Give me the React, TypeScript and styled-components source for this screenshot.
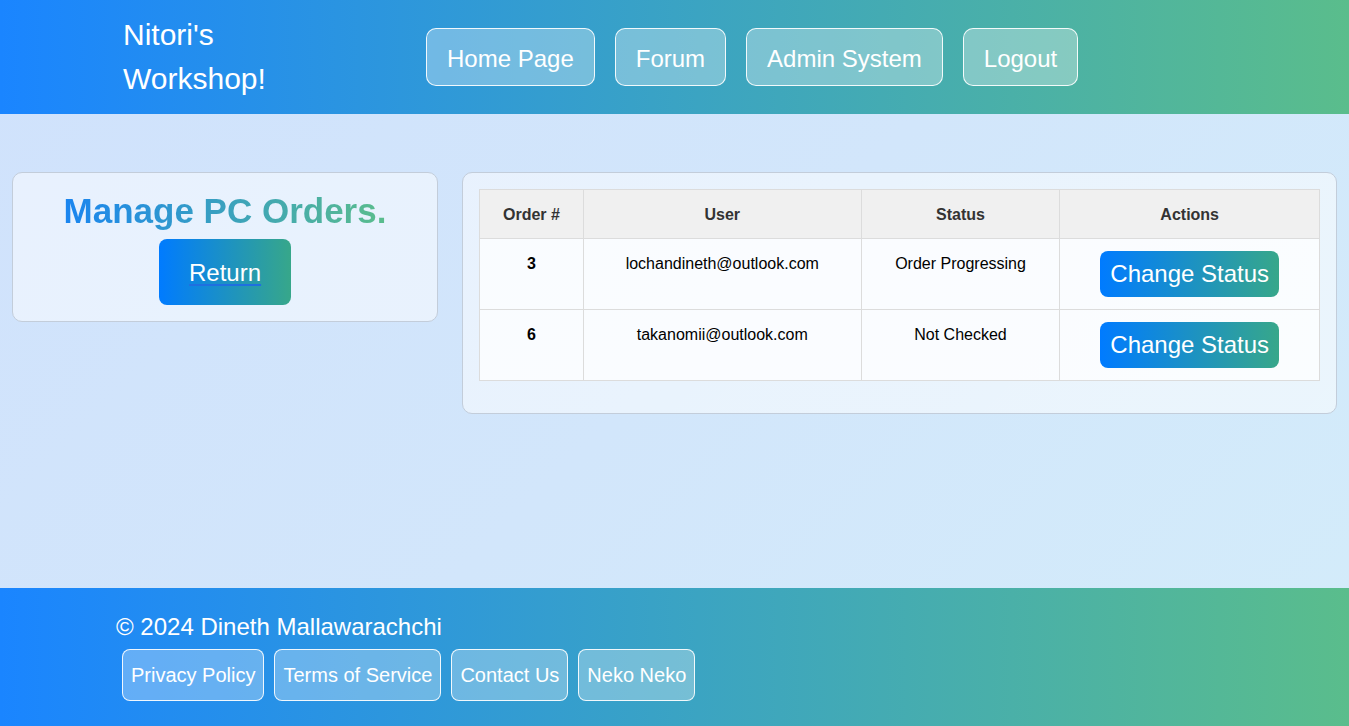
import * as React from "react";
import styled, { createGlobalStyle } from "styled-components";

const GlobalStyle = createGlobalStyle`
  html, body {
    margin: 0;
    padding: 0;
  }
  body {
    font-family: "Liberation Sans", Arial, sans-serif;
  }
  * {
    box-sizing: border-box;
  }
`;

const brandGradient = "linear-gradient(90deg, #1a85ff 0%, #3aa3c4 50%, #5abd8c 100%)";
const buttonGradient = "linear-gradient(90deg, #007bff, #37a78a)";

const Page = styled.div`
  min-height: 100vh;
  display: flex;
  flex-direction: column;
  background: linear-gradient(135deg, #d0e2fc 0%, #d2e6fb 50%, #d3ecfa 100%);
`;

const Header = styled.header`
  height: 114px;
  display: flex;
  align-items: center;
  padding: 0 0 0 123px;
  background: ${brandGradient};
  color: #fff;
`;

const Brand = styled.div`
  width: 160px;
  font-size: 30px;
  line-height: 44px;
`;

const Nav = styled.nav`
  display: flex;
  gap: 20px;
  margin-left: 143px;
`;

const NavLink = styled.a`
  display: block;
  padding: 16px 20px 13px;
  font-size: 24px;
  line-height: 27px;
  color: #fff;
  text-decoration: none;
  background: rgba(255, 255, 255, 0.32);
  border: 1px solid rgba(255, 255, 255, 0.9);
  border-radius: 10px;
`;

const Main = styled.main`
  flex: 1;
  display: grid;
  grid-template-columns: 426px 1fr;
  align-items: start;
  gap: 24px;
  padding: 58px 12px 0;
`;

const Card = styled.section`
  background: rgba(255, 255, 255, 0.5);
  border: 1px solid #c3cdda;
  border-radius: 10px;
  padding: 16px;
`;

const ManageCard = styled(Card)`
  display: flex;
  flex-direction: column;
  align-items: center;
`;

const Title = styled.h2`
  margin: 1px 0 0;
  font-size: 35px;
  line-height: 41px;
  font-weight: 700;
  background: linear-gradient(90deg, #1a85f0, #5abd8c);
  -webkit-background-clip: text;
  background-clip: text;
  color: transparent;
`;

const GradientButton = styled.a<{ big?: boolean }>`
  display: inline-block;
  background: ${buttonGradient};
  color: #fff;
  border-radius: 8px;
  font-size: 24px;
  line-height: 28px;
  padding: ${(p) => (p.big ? "20px 30px 18px" : "9px 10px 9px")};
  text-decoration: ${(p) => (p.big ? "underline" : "none")};
  text-decoration-color: #1f6fe0;
  text-underline-offset: 3px;
  cursor: pointer;
`;

const ReturnButton = styled(GradientButton)`
  margin-top: 8px;
  width: 132px;
  text-align: center;
`;

const TableCard = styled(Card)`
  padding-bottom: 32px;
  background: linear-gradient(135deg, rgba(255, 255, 255, 0.5), rgba(255, 255, 255, 0.55));
`;

const OrdersTable = styled.table`
  width: 100%;
  border-collapse: collapse;
  background: rgba(255, 255, 255, 0.75);
  font-size: 16px;
`;

const HeadCell = styled.th<{ w: number }>`
  width: ${(p) => p.w}px;
  background: #f0f0f0;
  color: #333;
  font-weight: 700;
  padding: 16px 8px 14px;
  line-height: 18px;
  border: 1px solid #dcdcdc;
`;

const Cell = styled.td<{ bold?: boolean }>`
  padding: 12px 8px 12px;
  vertical-align: top;
  text-align: center;
  line-height: 26px;
  color: #000;
  font-weight: ${(p) => (p.bold ? 700 : 400)};
  border: 1px solid #dcdcdc;
`;

const Footer = styled.footer`
  background: ${brandGradient};
  color: #fff;
  padding: 25px 0 25px 116px;
`;

const Copyright = styled.div`
  font-size: 24px;
  line-height: 28px;
`;

const FooterLinks = styled.div`
  display: flex;
  gap: 10px;
  margin: 8px 0 0 6px;
`;

const FooterLink = styled.a`
  display: block;
  padding: 14px 8px;
  font-size: 20px;
  line-height: 22px;
  color: #fff;
  text-decoration: none;
  background: rgba(255, 255, 255, 0.3);
  border: 1px solid rgba(255, 255, 255, 0.9);
  border-radius: 8px;
`;

const columns = [
  { name: "Order #", width: 104 },
  { name: "User", width: 278 },
  { name: "Status", width: 199 },
  { name: "Actions", width: 260 },
];

const orders = [
  { id: 3, user: "lochandineth@outlook.com", status: "Order Progressing" },
  { id: 6, user: "takanomii@outlook.com", status: "Not Checked" },
];

const navItems = ["Home Page", "Forum", "Admin System", "Logout"];
const footerItems = ["Privacy Policy", "Terms of Service", "Contact Us", "Neko Neko"];

const App = () => (
  <>
    <GlobalStyle />
    <Page>
      <Header>
        <Brand>Nitori's Workshop!</Brand>
        <Nav>
          {navItems.map((item) => (
            <NavLink key={item}>{item}</NavLink>
          ))}
        </Nav>
      </Header>

      <Main>
        <ManageCard>
          <Title>Manage PC Orders.</Title>
          <ReturnButton big>Return</ReturnButton>
        </ManageCard>

        <TableCard>
          <OrdersTable>
            <thead>
              <tr>
                {columns.map((col) => (
                  <HeadCell key={col.name} w={col.width}>
                    {col.name}
                  </HeadCell>
                ))}
              </tr>
            </thead>
            <tbody>
              {orders.map((order) => (
                <tr key={order.id}>
                  <Cell bold>{order.id}</Cell>
                  <Cell>{order.user}</Cell>
                  <Cell>{order.status}</Cell>
                  <Cell>
                    <GradientButton>Change Status</GradientButton>
                  </Cell>
                </tr>
              ))}
            </tbody>
          </OrdersTable>
        </TableCard>
      </Main>

      <Footer>
        <Copyright>© 2024 Dineth Mallawarachchi</Copyright>
        <FooterLinks>
          {footerItems.map((item) => (
            <FooterLink key={item}>{item}</FooterLink>
          ))}
        </FooterLinks>
      </Footer>
    </Page>
  </>
);

export default App;
